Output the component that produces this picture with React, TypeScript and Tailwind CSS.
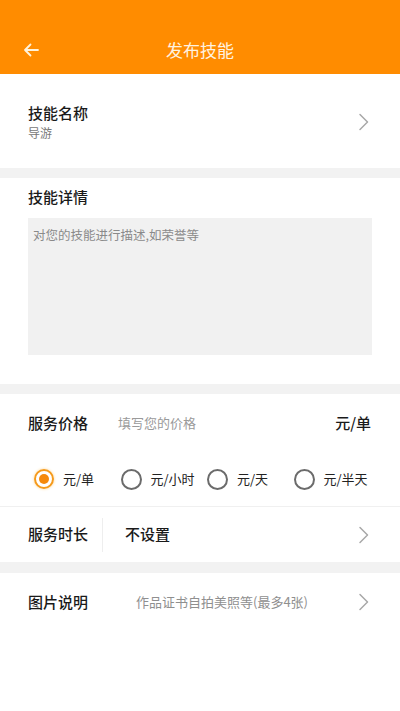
import React from "react"

const font = { fontFamily: '"Noto Sans CJK SC", "Noto Sans", sans-serif' }

function Chevron() {
  return (
    <svg width="12" height="18" viewBox="0 0 12 18" fill="none" className="shrink-0">
      <path d="M2 1.5l7.5 7.5L2 16.5" stroke="#a8a8a8" strokeWidth="1.5" strokeLinecap="round" strokeLinejoin="round" />
    </svg>
  )
}

function Radio({ label, checked }: { label: string; checked?: boolean }) {
  return (
    <div className="flex items-center gap-[9px]">
      {checked ? (
        <span className="w-[20px] h-[20px] rounded-full border-2 border-[#f59a1b] flex items-center justify-center shadow-[0_0_3px_#ffd591]">
          <span className="w-[10px] h-[10px] rounded-full bg-[#f5890c]"></span>
        </span>
      ) : (
        <span className="w-[21px] h-[21px] rounded-full border-2 border-[#6b6b6b]"></span>
      )}
      <span className="text-[13px] text-[#222]">{label}</span>
    </div>
  )
}

export default function App() {
  return (
    <div className="min-h-[711px] bg-white" style={font}>
      {/* header */}
      <div className="h-[74px] bg-[#ff8c00] pt-[26px]">
        <div className="relative h-[48px] flex items-center justify-center">
          <svg className="absolute left-[23px] top-[17px]" width="16" height="14" viewBox="0 0 16 14" fill="none">
            <path d="M15 7H2M7.5 1.5L2 7l5.5 5.5" stroke="#fff3dc" strokeWidth="1.8" strokeLinecap="round" strokeLinejoin="round" />
          </svg>
          <span className="text-[17px] text-[#fff3e0]">发布技能</span>
        </div>
      </div>

      {/* skill name */}
      <div className="h-[94px] flex items-center justify-between pl-[28px] pr-[30px] pt-[2px]">
        <div className="flex flex-col">
          <span className="text-[15px] font-medium text-[#1a1a1a] leading-[20px]">技能名称</span>
          <span className="text-[12px] text-[#777] leading-[19px]">导游</span>
        </div>
        <Chevron />
      </div>

      <div className="h-[10px] bg-[#f2f2f2]"></div>

      {/* detail */}
      <div className="px-[28px] pt-[7px] pb-[29px]">
        <div className="text-[15px] font-medium text-[#1a1a1a] leading-[24px]">技能详情</div>
        <div className="mt-[9px] h-[137px] bg-[#f1f1f1] px-[5px] pt-[3px]">
          <span className="text-[12.5px] text-[#8a8a8a]">对您的技能进行描述,如荣誉等</span>
        </div>
      </div>

      <div className="h-[10px] bg-[#f2f2f2]"></div>

      {/* price */}
      <div className="h-[58px] flex items-center pl-[28px] pr-[29px]">
        <span className="text-[15px] font-medium text-[#1a1a1a] w-[90px]">服务价格</span>
        <span className="text-[13px] text-[#9a9a9a] flex-1">填写您的价格</span>
        <span className="text-[15px] font-medium text-[#1a1a1a]">元/单</span>
      </div>
      <div className="h-[54px] grid grid-cols-4 items-center pl-[34px] pr-[20px]">
        <Radio label="元/单" checked />
        <Radio label="元/小时" />
        <Radio label="元/天" />
        <Radio label="元/半天" />
      </div>
      <div className="h-px bg-[#f0f0f0]"></div>

      {/* duration */}
      <div className="h-[55px] flex items-center pl-[28px] pr-[30px]">
        <span className="text-[15px] font-medium text-[#1a1a1a] w-[74px]">服务时长</span>
        <span className="w-px h-[34px] bg-[#eeeeee]"></span>
        <span className="text-[15px] font-medium text-[#1a1a1a] ml-[22px] flex-1">不设置</span>
        <Chevron />
      </div>

      <div className="h-[11px] bg-[#f2f2f2]"></div>

      {/* pictures */}
      <div className="h-[58px] flex items-center pl-[28px] pr-[30px]">
        <span className="text-[15px] font-medium text-[#1a1a1a] w-[108px]">图片说明</span>
        <span className="text-[13px] text-[#8f8f8f] flex-1">作品证书自拍美照等(最多4张)</span>
        <Chevron />
      </div>
    </div>
  )
}
